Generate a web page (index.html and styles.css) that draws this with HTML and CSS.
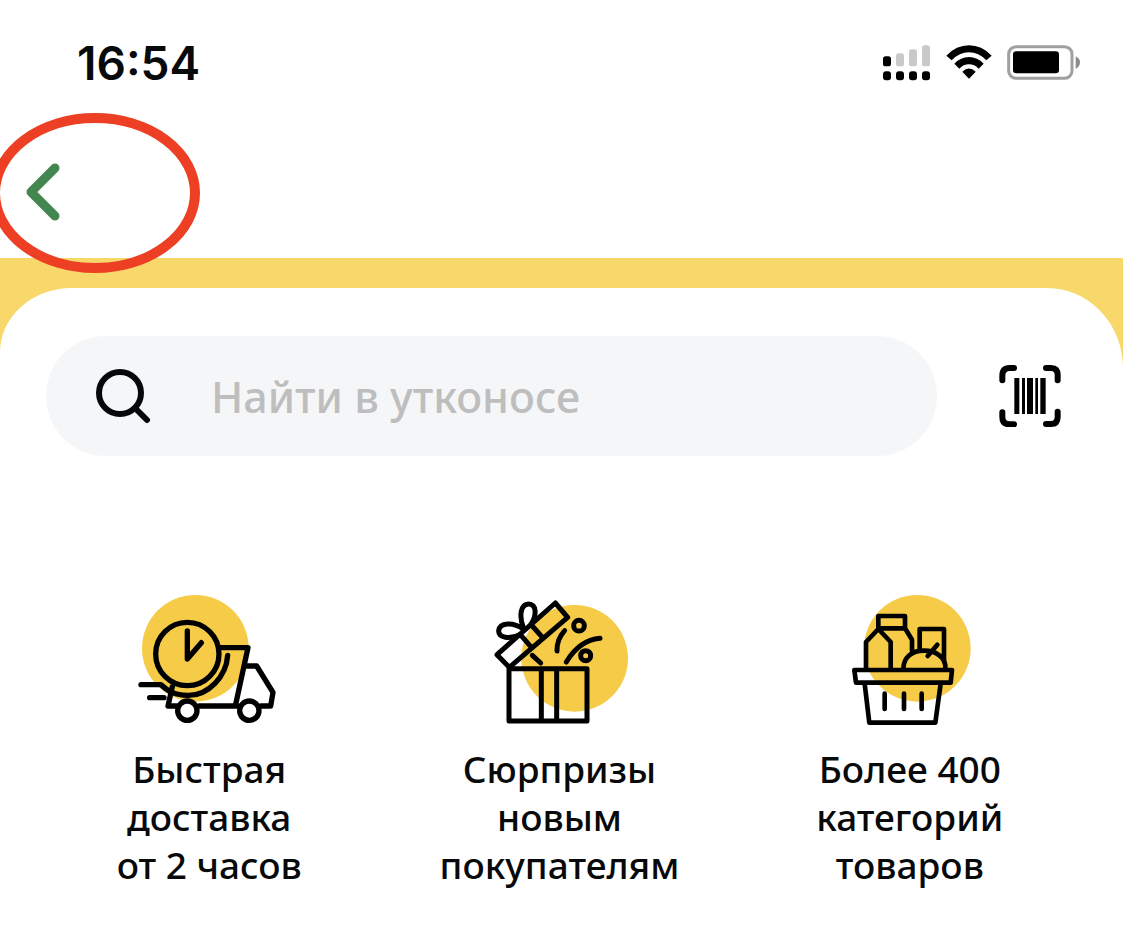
FILE: index.html
```html
<!DOCTYPE html>
<html lang="ru">
<head>
<meta charset="utf-8">
<meta name="viewport" content="width=device-width, initial-scale=1">
<title>Утконос</title>
<link rel="stylesheet" href="styles.css">
</head>
<body>
<header class="status">
  <time class="status-time">16:54</time>
  <div class="status-icons">
    <svg class="signal" viewBox="0 0 144 108" aria-hidden="true">
      <g fill="#c9c9c9"><rect x="39" y="25" width="24" height="39" rx="8"/><rect x="78" y="13" width="24" height="51" rx="8"/><rect x="117" y="1" width="24" height="63" rx="8"/></g>
      <rect x="0" y="34" width="24" height="30" rx="8"/>
      <rect x="0" y="79" width="24" height="27" rx="9"/><rect x="39" y="79" width="24" height="27" rx="9"/><rect x="78" y="79" width="24" height="27" rx="9"/><rect x="117" y="79" width="24" height="27" rx="9"/>
    </svg>
    <svg class="wifi" viewBox="0 0 138 108" aria-hidden="true">
      <path d="M1 32Q31 1 69 1T137 32L121 46Q98 22 69 22T17 46Z"/>
      <path d="M25 56Q44 36 69 36T113 56L98 71Q86 58 69 58T40 71Z"/>
      <path d="M49 80Q69 61 89 80L69 101Z"/>
    </svg>
    <svg class="battery" viewBox="0 0 222 108" aria-hidden="true">
      <rect x="5" y="5" width="190" height="95" rx="22" fill="#fff" stroke="#a0a0a0" stroke-width="9"/>
      <rect x="18" y="19" width="138" height="66" rx="10"/>
      <path d="M206 34Q219 40 219 52T206 72Z" fill="#8c8c8c"/>
    </svg>
  </div>
</header>
<nav class="nav">
  <button class="back" type="button" aria-label="Назад">
    <svg viewBox="0 0 34 58" aria-hidden="true"><path d="M29 5L5 29L29 53" fill="none" stroke="#43864f" stroke-width="9" stroke-linecap="round" stroke-linejoin="round"/></svg>
  </button>
  <svg class="mark" viewBox="0 0 210 160" aria-hidden="true"><ellipse cx="105" cy="80" rx="100" ry="75" fill="none" stroke="#ec3f24" stroke-width="10"/></svg>
</nav>
<main class="backdrop">
  <div class="sheet">
    <form class="search-row" role="search">
      <label class="search">
        <svg class="search-icon" viewBox="0 0 56 56" aria-hidden="true"><g fill="none" stroke="#050709" stroke-width="6" stroke-linecap="round"><circle cx="25" cy="25" r="21"/><path d="M40 40L52 52"/></g></svg>
        <input class="search-input" type="search" placeholder="Найти в утконосе" aria-label="Найти в утконосе">
      </label>
      <button class="scan" type="button" aria-label="Сканировать штрихкод">
        <svg viewBox="0 0 186 186" aria-hidden="true">
          <path d="M10 46V32Q10 9 32 9H45M141 9H156Q176 9 176 30V46M176 140V156Q176 177 156 177H141M45 178H32Q10 178 10 156V142" fill="none" stroke="#000" stroke-width="18" stroke-linecap="round"/>
          <path d="M46 39h15v108H46zM69 39h9v108h-9zM84 39h18v108H84zM109 39h8v108h-8zM124 39h16v108h-16z"/>
        </svg>
      </button>
    </form>
    <ul class="features">
      <li class="feature">
        <svg viewBox="0 0 480 480" aria-hidden="true">
          <circle cx="199" cy="190" r="160" fill="#f6cb48"/>
          <path d="M323 360L350 243H383L433 322L425 363H396Z" fill="#fff"/>
          <g fill="none" stroke="#000" stroke-width="16" stroke-linecap="round" stroke-linejoin="round">
            <circle cx="175" cy="207" r="95"/>
            <path d="M175 138V222L217 173"/>
            <path d="M273 188H357L319 363M353 243H383L432 322L425 363H396M143 363H117L130 305M210 363H328"/>
            <path d="M296 211C292 273 239 333 175 331C139 330 120 321 96 299H36M62 338H105"/>
            <circle cx="175" cy="377" r="29" fill="#fff"/><circle cx="361" cy="377" r="29" fill="#fff"/>
          </g>
        </svg>
        <p>Быстрая<br>доставка<br>от 2 часов</p>
      </li>
      <li class="feature">
        <svg viewBox="0 0 480 480" aria-hidden="true">
          <circle cx="287" cy="220" r="160" fill="#f6cb48"/>
          <g fill="none" stroke="#000" stroke-width="15" stroke-linecap="round" stroke-linejoin="round">
            <path d="M90 251H324V408H90ZM187 251V408M233 251V408"/>
            <path d="M54 209L229 54L266 97L91 247ZM126 151L158 188M160 123L193 160"/>
            <path d="M133 128C119 91 126 58 148 57C173 56 175 91 154 121M124 148C92 165 58 158 59 137C62 112 102 110 133 132"/>
            <path d="M160 211L185 234M257 137Q233 163 234 198M262 231C288 188 318 164 363 160"/>
            <circle cx="300" cy="122" r="16"/><circle cx="320" cy="212" r="15"/>
          </g>
        </svg>
        <p>Сюрпризы<br>новым<br>покупателям</p>
      </li>
      <li class="feature">
        <svg viewBox="-30 0 480 480" aria-hidden="true">
          <circle cx="232" cy="190" r="160" fill="#f6cb48"/>
          <g fill="none" stroke="#000" stroke-width="14" stroke-linecap="round" stroke-linejoin="round">
            <path d="M43 255H336L332 293H48Z"/>
            <path d="M74 296L88 413H286L302 296M134 326V372M192 326V372M245 326V372"/>
            <path d="M78 252V171L115 132L152 171V252M115 130V93H195V130L216 164V197M118 130H195"/>
            <path d="M239 192V132H312V230M190 252C190 218 215 197 252 197S319 218 316 252M263 213L292 179"/>
          </g>
        </svg>
        <p>Более 400<br>категорий<br>товаров</p>
      </li>
    </ul>
  </div>
</main>
</body>
</html>
```
FILE: styles.css
```css
* { box-sizing: border-box; }
body {
  margin: 0;
  min-height: 100vh;
  display: flex;
  flex-direction: column;
  background: #fff;
  color: #08090a;
  font-family: "Noto Sans", sans-serif;
}
svg { display: block; }
button { border: 0; padding: 0; background: none; cursor: pointer; }
.status {
  height: 126px;
  padding: 0 42px 0 77px;
  display: flex;
  align-items: center;
  justify-content: space-between;
}
.status-time {
  font-family: Inter, sans-serif;
  font-size: 46px;
  font-weight: 600;
}
.status-icons { display: flex; gap: 15px; }
.signal { width: 48px; height: 36px; }
.wifi { width: 46px; height: 36px; }
.battery { width: 74px; height: 36px; }
.nav {
  position: relative;
  height: 132px;
  padding-left: 26px;
  display: flex;
  align-items: center;
}
.back svg { width: 34px; height: 58px; }
.mark {
  position: absolute;
  left: -10px;
  top: -13px;
  width: 210px;
  height: 160px;
  pointer-events: none;
}
.backdrop {
  flex: 1;
  display: flex;
  padding-top: 30px;
  background: linear-gradient(#f8d86b 120px, #fff 120px);
}
.sheet {
  flex: 1;
  padding-top: 48px;
  background: #fff;
  border-radius: 72px 76px 0 0 / 64px 80px 0 0;
}
.search-row {
  display: flex;
  align-items: center;
  gap: 62px;
  padding: 0 62px 0 46px;
}
.search {
  flex: 1;
  min-width: 0;
  height: 120px;
  padding: 0 49px;
  display: flex;
  align-items: center;
  gap: 60px;
  border-radius: 60px;
  background: #f5f6f8;
}
.search-icon { width: 56px; height: 56px; flex: none; }
.search-input {
  flex: 1;
  min-width: 0;
  padding: 0;
  border: 0;
  outline: 0;
  background: none;
  font: 500 43px "Noto Sans", sans-serif;
}
.search-input::placeholder { color: #bebebe; opacity: 1; }
.scan svg { width: 62px; height: 62px; }
.features {
  list-style: none;
  margin: 129px 0 0;
  padding: 0 38px 48px 34px;
  display: grid;
  grid-template-columns: repeat(3, 1fr);
}
.feature {
  display: flex;
  flex-direction: column;
  align-items: center;
  text-align: center;
}
.feature svg { width: 160px; height: 160px; }
.feature p {
  margin: 0;
  font-size: 37px;
  font-weight: 500;
  line-height: 48px;
}
```
